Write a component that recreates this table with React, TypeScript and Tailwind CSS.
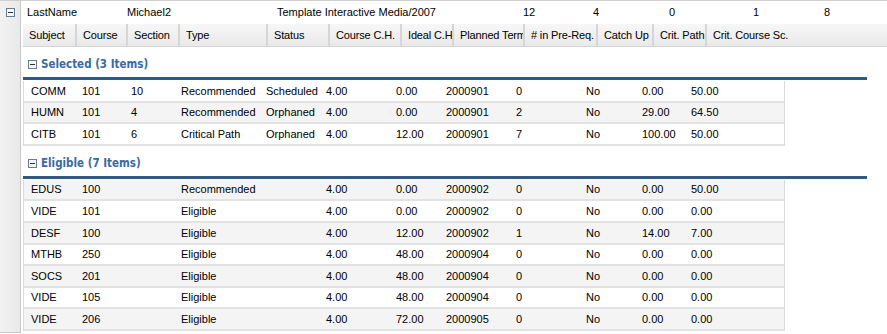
import React from "react";

type Row = string[];

const selected: Row[] = [
  ["COMM", "101", "10", "Recommended", "Scheduled", "4.00", "0.00", "2000901", "0", "No", "0.00", "50.00"],
  ["HUMN", "101", "4", "Recommended", "Orphaned", "4.00", "0.00", "2000901", "2", "No", "29.00", "64.50"],
  ["CITB", "101", "6", "Critical Path", "Orphaned", "4.00", "12.00", "2000901", "7", "No", "100.00", "50.00"],
];

const eligible: Row[] = [
  ["EDUS", "100", "", "Recommended", "", "4.00", "0.00", "2000902", "0", "No", "0.00", "50.00"],
  ["VIDE", "101", "", "Eligible", "", "4.00", "0.00", "2000902", "0", "No", "0.00", "0.00"],
  ["DESF", "100", "", "Eligible", "", "4.00", "12.00", "2000902", "1", "No", "14.00", "7.00"],
  ["MTHB", "250", "", "Eligible", "", "4.00", "48.00", "2000904", "0", "No", "0.00", "0.00"],
  ["SOCS", "201", "", "Eligible", "", "4.00", "48.00", "2000904", "0", "No", "0.00", "0.00"],
  ["VIDE", "105", "", "Eligible", "", "4.00", "48.00", "2000904", "0", "No", "0.00", "0.00"],
  ["VIDE", "206", "", "Eligible", "", "4.00", "72.00", "2000905", "0", "No", "0.00", "0.00"],
];

// header cells: label + width in px
const headers: [string, number][] = [
  ["Subject", 54],
  ["Course", 51],
  ["Section", 52],
  ["Type", 88],
  ["Status", 62],
  ["Course C.H.", 72],
  ["Ideal C.H", 52],
  ["Planned Term", 71],
  ["# in Pre-Req.", 73],
  ["Catch Up", 56],
  ["Crit. Path", 53],
];

const cellW = [51, 49, 50, 85, 60, 70, 50, 70, 70, 56, 49];

function Minus() {
  return (
    <svg width="9" height="9" viewBox="0 0 9 9" className="shrink-0">
      <rect x="0.5" y="0.5" width="8" height="8" fill="#f4f6f8" stroke="#6b7c8e" />
      <rect x="2" y="4" width="5" height="1" fill="#2a3440" />
    </svg>
  );
}

function Group({ title, rows, oddGray }: { title: string; rows: Row[]; oddGray: boolean }) {
  return (
    <div>
      <div className="ml-[5px] flex h-[30px] items-center gap-[4px] pt-[5px]">
        <Minus />
        <span className="font-['DejaVu_Sans_Condensed','DejaVu_Sans',sans-serif] text-[11.5px] font-bold text-[#3b6aa0]">
          {title}
        </span>
      </div>
      <div className="h-[3px] w-[844px] bg-[#2f5a86]" />
      <div className="mt-px w-[762px] border-l border-r border-[#d9d9d9]">
        {rows.map((r, i) => (
          <div
            key={i}
            className={`flex h-[21.6px] items-center border-b-2 border-[#e2e2e2] pl-[7px] ${(i % 2 === 1) === oddGray ? "bg-[#f4f4f4]" : "bg-white"}`}
          >
            {r.map((c, j) => (
              <div
                key={j}
                className="shrink-0 whitespace-nowrap"
                style={j < cellW.length ? { width: cellW[j] } : { flex: 1 }}
              >
                {c}
              </div>
            ))}
          </div>
        ))}
      </div>
    </div>
  );
}

export default function App() {
  return (
    <div className="flex h-[334px] w-[887px] overflow-hidden border-t border-[#cfcfcf] bg-white font-['Liberation_Sans',Arial,sans-serif] text-[11px] text-black">
      <div className="flex h-[332px] w-[21px] shrink-0 flex-col items-center border-b border-r border-[#c8c8c8] bg-gradient-to-r from-[#f2f2f2] to-[#e9e9e9] pt-[7px]">
        <Minus />
      </div>
      <div className="flex min-w-0 flex-1 flex-col pl-[2px]">
        <div className="flex h-[23px] items-center">
          <div className="w-[104px] pl-[4px]">LastName</div>
          <div className="w-[150px]">Michael2</div>
          <div className="w-[159px] overflow-hidden whitespace-nowrap">Template Interactive Media/2007020</div>
          <div className="w-[87px]" />
          <div className="w-[70px]">12</div>
          <div className="w-[76px]">4</div>
          <div className="w-[84px]">0</div>
          <div className="w-[71px]">1</div>
          <div>8</div>
        </div>
        <div className="flex h-[23px] border-b border-[#d4d4d4] bg-gradient-to-b from-[#f7f7f7] to-[#e9e9e9] tracking-[-0.15px]">
          {headers.map(([h, w]) => (
            <div
              key={h}
              className="flex shrink-0 items-center overflow-hidden whitespace-nowrap border-r-2 border-[#d6d6d6] pl-[6px]"
              style={{ width: w }}
            >
              {h}
            </div>
          ))}
          <div className="flex flex-1 items-center whitespace-nowrap pl-[6px]">Crit. Course Sc.</div>
        </div>
        <Group title="Selected (3 Items)" rows={selected} oddGray />
        <Group title="Eligible (7 Items)" rows={eligible} oddGray={false} />
      </div>
    </div>
  );
}
